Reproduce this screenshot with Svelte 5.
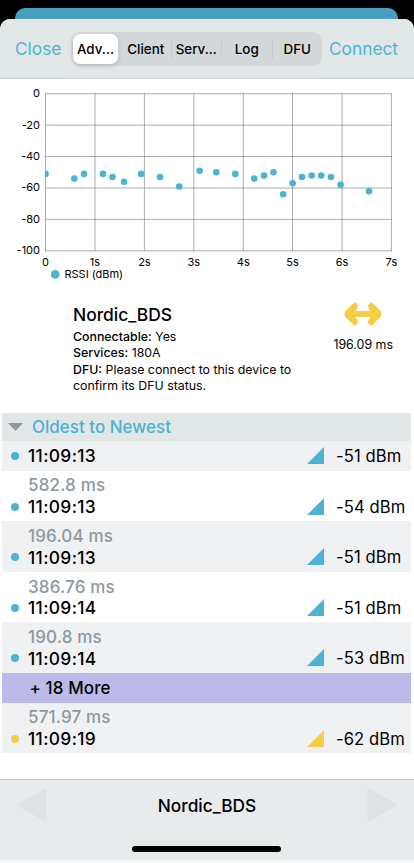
<script>
  const tabs = ['Adv...', 'Client', 'Serv...', 'Log', 'DFU'];
  const xs = [45.5, 95, 144.4, 193.8, 243.3, 292.5, 342.1, 391.4];
  const ys = [93.7, 125.2, 156.5, 188, 219.4, 250.8];
  const points = [
    [45.5, 173.9], [74.3, 178.6], [84, 173.9], [103, 173.9], [112.5, 177], [124, 181.7],
    [141.2, 173.9], [160, 177], [179.2, 186.5], [199.6, 170.8], [216.3, 172.3], [235.3, 173.9],
    [254.2, 178.6], [264, 175.6], [273.5, 172.3], [283.2, 194.3], [292.6, 183.3], [302, 177],
    [311.7, 175.5], [321.2, 175.5], [331, 177], [340.6, 184.8], [369, 191.2]
  ];
  const rows = [
    { time: '11:09:13', rssi: '-51 dBm' },
    { gap: '582.8 ms', time: '11:09:13', rssi: '-54 dBm' },
    { gap: '196.04 ms', time: '11:09:13', rssi: '-51 dBm' },
    { gap: '386.76 ms', time: '11:09:14', rssi: '-51 dBm' },
    { gap: '190.8 ms', time: '11:09:14', rssi: '-53 dBm' },
    { more: '+ 18 More' },
    { gap: '571.97 ms', time: '11:09:19', rssi: '-62 dBm', weak: true }
  ];
</script>

<div class="screen">
  <div class="behind"></div>
  <main class="sheet">
    <header>
      <span class="link close">Close</span>
      <nav>
        {#each tabs as tab, i}
          <span class="tab" class:active={i === 0} class:sep={i > 1}>{tab}</span>
        {/each}
      </nav>
      <span class="link connect">Connect</span>
    </header>

    <svg class="chart" width="414" height="209" viewBox="0 80 414 209">
      <defs><clipPath id="plot"><rect x="45" y="93" width="348" height="159" /></clipPath></defs>
      {#each ys as y, i}
        <line x1="45" x2="392" y1={y} y2={y} />
        <text x="40" y={y + 3.4} text-anchor="end">{i ? -20 * i : 0}</text>
      {/each}
      {#each xs as x, i}
        <line x1={x} x2={x} y1="93.5" y2="251" />
        <text {x} y="265.6" text-anchor="middle">{i ? i + 's' : '0'}</text>
      {/each}
      <g clip-path="url(#plot)">
        {#each points as [x, y]}<circle cx={x} cy={y} r="3.3" />{/each}
      </g>
      <circle cx="55.2" cy="274.4" r="4.4" />
      <text x="64.5" y="278.4" textLength="58.5">RSSI (dBm)</text>
    </svg>

    <section class="device">
      <div class="info">
        <h1>Nordic_BDS</h1>
        <p><b>Connectable:</b> Yes</p>
        <p><b>Services:</b> 180A</p>
        <p><b>DFU:</b> Please connect to this device to<br />confirm its DFU status.</p>
      </div>
      <div class="interval">
        <svg width="38" height="26" viewBox="0 0 38 26">
          <path d="M10.800 2.800 3.200 9.900Q.6 13 3.200 16.100L10.800 23.200 12.700 21 10 16V10L12.700 5zM27.200 2.800l7.600 7.100q2.600 3.100 0 6.200L27.200 23.200 25.300 21 28 16V10L25.300 5z" stroke-width="2.800" stroke-linejoin="round" />
          <path d="M5 10.100h28v5.800H5z" />
        </svg>
        <span>196.09 ms</span>
      </div>
    </section>

    <section class="list">
      <div class="order">
        <svg width="15" height="8" viewBox="0 0 15 8"><path d="M0 0h15L7.5 8z" /></svg>
        <span>Oldest to Newest</span>
      </div>
      {#each rows as row, i}
        {#if row.more}
          <div class="more">{row.more}</div>
        {:else}
          <div class="row" class:first={!row.gap} class:shade={i % 2 === 0} class:weak={row.weak}>
            {#if row.gap}<div class="gap">{row.gap}</div>{/if}
            <div class="entry">
              <i class="dot"></i>
              <b class="time">{row.time}</b>
              <svg width="17" height="17" viewBox="0 0 17 17"><path d="M17 0v17H0z" /></svg>
              <span class="rssi">{row.rssi}</span>
            </div>
          </div>
        {/if}
      {/each}
    </section>

    <footer>
      <div class="pager">
        <svg width="30" height="34" viewBox="0 0 30 34"><path d="M1.3 15.6 27.5.9q2-.9 2 1.2v29.8q0 2.1-2 1.2L1.3 18.4q-2.2-1.4 0-2.8z" /></svg>
        <strong>Nordic_BDS</strong>
        <svg width="30" height="34" viewBox="0 0 30 34"><path d="M28.7 15.6 2.5.9q-2-.9-2 1.2v29.8q0 2.1 2 1.2l26.2-14.7q2.2-1.4 0-2.8z" /></svg>
      </div>
      <div class="home"></div>
      <div class="edge"></div>
    </footer>
  </main>
</div>

<style>
  .screen {
    width: 414px; height: 863px; overflow: hidden; background: #000; color: #000;
    font-family: Inter, "Liberation Sans", sans-serif;
    display: flex; flex-direction: column; box-sizing: border-box; padding-top: 8px;
  }
  .behind { height: 11px; margin: 0 16px 0 15px; background: #489ebd; border-radius: 10px 10px 0 0; flex: none; }
  .sheet { flex: 1; background: #fff; display: flex; flex-direction: column; border-radius: 10px 10px 0 0; overflow: hidden; }
  header {
    height: 60px; box-sizing: border-box; background: #e1e7e7; border-bottom: 1px solid #cfd4d6;
    display: flex; align-items: center; padding: 0 15px; flex: none;
  }
  .link { color: #4eb2d3; font-size: 17.3px; white-space: nowrap; }
  .close { width: 56px; }
  .connect { margin-left: 7px; }
  nav { display: flex; width: 251px; height: 34px; background: #d3d7da; border-radius: 9px; box-sizing: border-box; padding: 2px 0 2px 2px; align-items: center; flex: none; }
  .tab { flex: 1; text-align: center; font-size: 13.4px; font-weight: 450; line-height: 20px; height: 20px; box-sizing: border-box; white-space: nowrap; }
  .sep { border-left: 1px solid #c6cbce; }
  .active { flex: 0 0 45px; margin-right: 3px; height: 30px; line-height: 30px; border-radius: 7px; background: #fff; font-weight: 530; box-shadow: 0 2px 5px #0002; }
  .chart { display: block; flex: none; margin-top: 1px; }
  .chart line { stroke: #808080; stroke-width: .65; }
  .chart circle { fill: #4eb2d3; }
  .chart text { font-size: 11px; }
  .device { height: 124.3px; flex: none; display: flex; justify-content: space-between; box-sizing: border-box; padding: 14px 21px 0 73px; }
  h1 { font-size: 17.4px; line-height: 24px; font-weight: 550; margin: 0 0 2px; }
  p { margin: 0; font-size: 12.35px; line-height: 16.25px; white-space: nowrap; }
  b { font-weight: 550; }
  .interval { display: flex; flex-direction: column; align-items: center; font-size: 12.4px; line-height: 16px; margin-top: -2px; }
  .interval svg { fill: #f7cc46; stroke: none; }
  .interval path:first-child { stroke: #f7cc46; }
  .interval span { margin-top: 10px; }
  .list { margin: 0 3px 0 2px; flex: none; }
  .order { height: 27.7px; background: #e1e7e7; display: flex; align-items: center; padding-left: 6px; color: #4eb2d3; font-weight: 550; font-size: 17px; }
  .order svg { fill: #8e989f; margin-right: 9px; }
  .row { height: 50.6px; box-sizing: border-box; padding-top: 4.800px; }
  .row.first { height: 29.7px; padding-top: 4.5px; }
  .shade { background: #f0f1f3; }
  .gap { font-size: 17px; letter-spacing: .17px; line-height: 20.7px; font-weight: 500; color: #8e989f; padding-left: 26px; }
  .entry { display: flex; align-items: center; height: 21px; font-size: 16.6px; padding-left: 9px; color: #000; }
  .dot { width: 8px; height: 8px; border-radius: 50%; background: #4eb2d3; margin-right: 9px; }
  .time { width: 279px; font-size: 17.4px; letter-spacing: .35px; }
  .entry svg { fill: #4eb2d3; margin-right: 12px; margin-top: -1px; flex: none; }
  .weak .dot { background: #f7cc46; }
  .weak svg { fill: #f7cc46; }
  .rssi { white-space: nowrap; letter-spacing: .1px; }
  .more { height: 29.6px; line-height: 30.600px; background: #bdbae9; padding-left: 27.5px; font-size: 17px; letter-spacing: .1px; font-weight: 550; }
  footer { margin-top: auto; height: 84px; flex: none; background: #e8ebec; border-top: 1px solid #c0c2c3; box-sizing: border-box; display: flex; flex-direction: column; align-items: center; }
  .pager { align-self: stretch; display: flex; justify-content: space-between; align-items: center; padding: 8px 17px 0; height: 34px; }
  .pager svg { fill: #dde2e3; }
  strong { font-size: 17.300px; font-weight: 550; }
  .home { width: 149px; height: 6px; border-radius: 3px; background: #000; margin: 24px 1px 0 0; }
  .edge { margin-top: auto; align-self: stretch; height: 3px; background: #f5f6f7; }
</style>
